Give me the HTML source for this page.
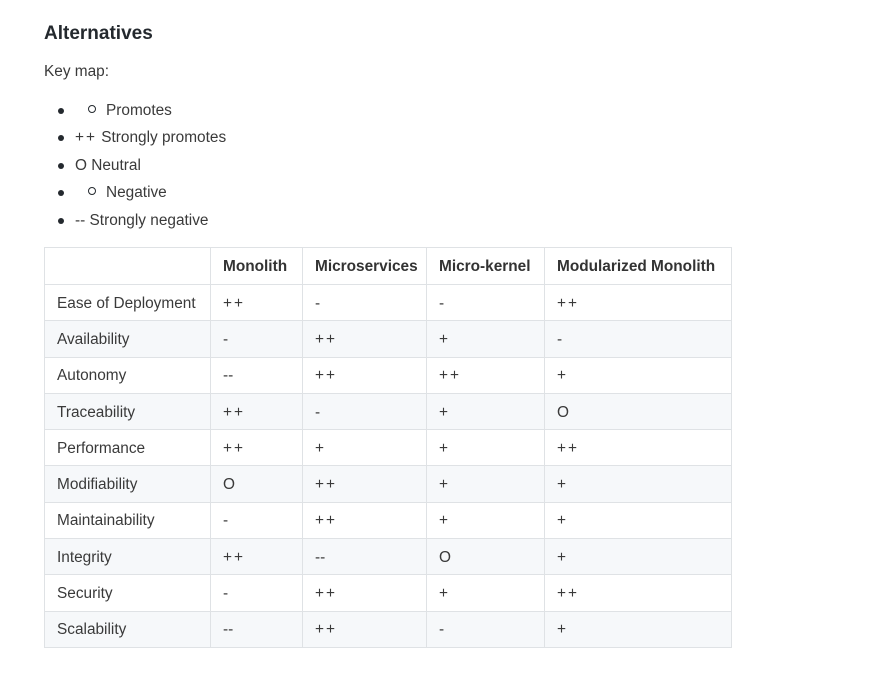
<!DOCTYPE html>
<html><head><style>
body{margin:0;background:#fff;width:884px;height:683px;position:relative;font-family:"Liberation Sans",sans-serif;color:#3a3a3a;font-size:15.4px;overflow:hidden}
.a{position:absolute;white-space:nowrap;line-height:20px}
h2{position:absolute;left:44px;top:22px;margin:0;font-size:19px;font-weight:bold;line-height:24px;color:#24292e}
.dot{position:absolute;width:6px;height:6px;border-radius:50%;background:#24292e}
.sub{display:inline-block;width:6px;height:6px;border:1px solid #24292e;border-radius:50%;margin-right:10px;vertical-align:2px}
.p{letter-spacing:2px}
table{position:absolute;left:44px;top:247px;border-collapse:collapse;font-size:15.4px;table-layout:fixed;width:687px}
td,th{border:1px solid #dfe2e5;padding:2px 12px 0;height:33.3px;line-height:18px;text-align:left;white-space:nowrap;overflow:hidden}
th{font-weight:bold;height:34px;color:#333}
tr:nth-child(odd) td{background:#f6f8fa}
</style></head><body>
<h2>Alternatives</h2>
<div class="a" style="left:44px;top:62px">Key map:</div>
<div class="dot" style="left:58px;top:108px"></div><div class="a" style="left:88px;top:101px"><span class="sub"></span>Promotes</div>
<div class="dot" style="left:58px;top:135px"></div><div class="a" style="left:75px;top:128px"><span class="p">++</span> Strongly promotes</div>
<div class="dot" style="left:58px;top:163px"></div><div class="a" style="left:75px;top:156px">O Neutral</div>
<div class="dot" style="left:58px;top:190px"></div><div class="a" style="left:88px;top:183px"><span class="sub"></span>Negative</div>
<div class="dot" style="left:58px;top:218px"></div><div class="a" style="left:75px;top:211px">-- Strongly negative</div>
<table>
<colgroup><col style="width:166px"><col style="width:92px"><col style="width:124px"><col style="width:118px"><col style="width:187px"></colgroup>
<tr><th></th><th>Monolith</th><th>Microservices</th><th>Micro-kernel</th><th>Modularized Monolith</th></tr>
<tr><td>Ease of Deployment</td><td class="p">++</td><td>-</td><td>-</td><td class="p">++</td></tr>
<tr><td>Availability</td><td>-</td><td class="p">++</td><td>+</td><td>-</td></tr>
<tr><td>Autonomy</td><td>--</td><td class="p">++</td><td class="p">++</td><td>+</td></tr>
<tr><td>Traceability</td><td class="p">++</td><td>-</td><td>+</td><td>O</td></tr>
<tr><td>Performance</td><td class="p">++</td><td>+</td><td>+</td><td class="p">++</td></tr>
<tr><td>Modifiability</td><td>O</td><td class="p">++</td><td>+</td><td>+</td></tr>
<tr><td>Maintainability</td><td>-</td><td class="p">++</td><td>+</td><td>+</td></tr>
<tr><td>Integrity</td><td class="p">++</td><td>--</td><td>O</td><td>+</td></tr>
<tr><td>Security</td><td>-</td><td class="p">++</td><td>+</td><td class="p">++</td></tr>
<tr><td>Scalability</td><td>--</td><td class="p">++</td><td>-</td><td>+</td></tr>
</table>
</body></html>
